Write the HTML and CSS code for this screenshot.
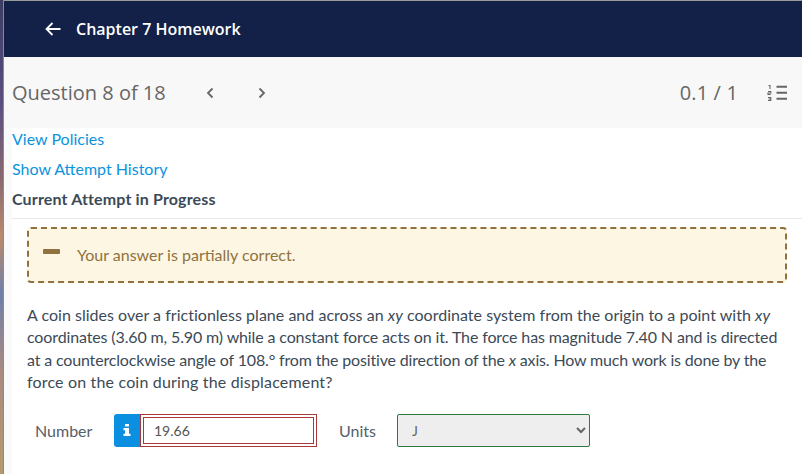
FILE: index.html
```html
<!DOCTYPE html>
<html lang="en">
<head>
  <meta charset="UTF-8">
  <meta name="viewport" content="width=device-width, initial-scale=1.0">
  <title>Chapter 7 Homework</title>
  <link rel="stylesheet" href="styles.css">
</head>
<body>
  <div class="edge"></div>
  <div class="page">
    <header class="topbar">
      <svg class="back" width="18" height="18" viewBox="0 0 18 18">
        <path d="M16.500 9H2.500M8.500 3L2.500 9l6 6" fill="none" stroke="#fff" stroke-width="1.800"/>
      </svg>
      <span class="topbar-title">Chapter 7 Homework</span>
    </header>

    <div class="question-bar">
      <span class="question-count">Question 8 of 18</span>
      <svg class="chev chev-prev" width="10" height="12" viewBox="0 0 10 12">
        <path d="M7.500 1.500L3 6l4.500 4.500" fill="none" stroke="#666" stroke-width="1.800"/>
      </svg>
      <svg class="chev chev-next" width="10" height="12" viewBox="0 0 10 12">
        <path d="M2.500 1.500L7 6l-4.500 4.500" fill="none" stroke="#666" stroke-width="1.800"/>
      </svg>
      <span class="score">0.1 / 1</span>
      <svg class="list-icon" width="20" height="18" viewBox="0 0 20 18">
        <path d="M9.500 3.700H20M9.500 9.700H20M9.500 15.700H20" stroke="#666" stroke-width="2"/>
        <path d="M1.500 2.500h1.500v3.500M1 8.500h2.800v1.500H1v1.500h2.800M1 14.500h2.800v3H1M1.500 16h2.300" fill="none" stroke="#666" stroke-width="1.100"/>
      </svg>
    </div>

    <div class="main">
      <div class="links">
        <a class="link" href="#">View Policies</a>
        <a class="link" href="#">Show Attempt History</a>
        <div class="attempt">Current Attempt in Progress</div>
      </div>

      <div class="content">
        <div class="notice">
          <span class="notice-dash"></span>
          <span class="notice-text">Your answer is partially correct.</span>
        </div>

        <p class="question">
          <span class="line line-1">A coin slides over a frictionless plane and across an <i>xy</i> coordinate system from the origin to a point with <i>xy</i></span>
          <span class="line line-2">coordinates (3.60 m, 5.90 m) while a constant force acts on it. The force has magnitude 7.40 N and is directed</span>
          <span class="line line-3">at a counterclockwise angle of 108.° from the positive direction of the <i>x</i> axis. How much work is done by the</span>
          <span class="line line-4">force on the coin during the displacement?</span>
        </p>

        <div class="answer">
          <span class="answer-label">Number</span>
          <span class="info-btn">
            <svg width="8" height="12" viewBox="0 0 8 12">
              <path d="M2 0h4v2.600H2zM0.500 4h5.500v5.800h1.500V12H0.500V9.800H2V6.200H0.500z" fill="#fff"/>
            </svg>
          </span>
          <span class="number-wrap"><input class="number-input" type="text" value="19.66"></span>
          <span class="answer-label units-label">Units</span>
          <select class="units-select"><option>J</option></select>
        </div>
      </div>
    </div>
  </div>
</body>
</html>
```

FILE: styles.css
```css
* {
  box-sizing: border-box;
}

body {
  margin: 0;
  height: 474px;
  overflow: hidden;
  display: flex;
  background-color: #fff;
  font-family: 'Lato', sans-serif;
  color: #3c4a57;
}

.edge {
  width: 4px;
  flex-shrink: 0;
  border-right: 1px solid #8a8a8a;
  background: linear-gradient(#3b3d63 0, #5a4f80 22%, #8a6a70 38%, #b98a6c 50%, #6f7fa8 62%, #a88a80 78%, #b59a70 100%);
}

.page {
  flex: 1;
  min-width: 0;
  background-color: #fafafa;
}

.topbar {
  height: 57px;
  padding-left: 40px;
  display: flex;
  align-items: center;
  border-top: 1px solid #999;
  background-color: #132148;
  color: #fff;
}

.back {
  margin-right: 14px;
}

.topbar-title {
  font-family: 'Open Sans', sans-serif;
  font-size: 16px;
  font-weight: 600;
}

.question-bar {
  height: 71px;
  padding: 0 15px 1px 8px;
  display: flex;
  align-items: center;
  background-color: #f8f8f8;
  font-family: 'Open Sans', sans-serif;
  color: #666;
}

.question-count {
  font-size: 20px;
  width: 193px;
}

.chev {
  margin-top: 2px;
}

.chev-prev {
  margin-right: 42px;
}

.score {
  margin-left: auto;
  margin-right: 29px;
  font-size: 20px;
  letter-spacing: 0.15px;
}

.main {
  margin-left: 8px;
  height: 346px;
  background-color: #fff;
}

.links {
  height: 91px;
  border-bottom: 1px solid #e8e8e8;
  font-size: 16px;
}

.link {
  display: block;
  height: 30px;
  line-height: 22px;
  color: #0b93e0;
  text-decoration: none;
}

.attempt {
  line-height: 22px;
  font-weight: 700;
  letter-spacing: 0.15px;
  color: #3c4a57;
}

.content {
  padding: 8px 15px 0 15px;
}

.notice {
  height: 56px;
  padding: 9px 14px 0 14px;
  display: flex;
  align-items: flex-start;
  background-color: #fdf6e3;
  border: 2px dashed #8f7240;
  border-radius: 4px;
  font-size: 16px;
  color: #8f7240;
}

.notice-dash {
  width: 17px;
  height: 5px;
  margin-top: 11px;
  background-color: #8f7240;
  border-radius: 1px;
}

.notice-text {
  margin-left: 17px;
  margin-top: 5px;
  line-height: 24px;
}

.question {
  margin: 21px 0 0 0;
  font-size: 16px;
  line-height: 22.4px;
  color: #3c4a57;
}

.line {
  display: block;
  white-space: nowrap;
}

.line-1 {
  letter-spacing: 0.02px;
}

.line-2 {
  letter-spacing: -0.13px;
}

.line-3 {
  letter-spacing: -0.16px;
}

.line-4 {
  letter-spacing: 0.17px;
}

.answer {
  margin-top: 20px;
  display: flex;
  align-items: center;
  font-size: 16px;
}

.answer-label {
  margin-left: 8px;
  width: 79px;
  color: #55606b;
}

.info-btn {
  width: 26px;
  height: 33px;
  display: flex;
  align-items: center;
  justify-content: center;
  background-color: #0b8fe0;
  border-radius: 3px 0 0 3px;
}

.number-wrap {
  width: 177px;
  height: 33px;
  padding: 2px;
  border: 1px solid #a93a3a;
}

.number-input {
  width: 100%;
  height: 100%;
  padding: 0 10px;
  border: 1px solid #a93a3a;
  outline: none;
  font-family: 'Lato', sans-serif;
  font-size: 14px;
  color: #555;
}

.units-label {
  margin-left: 22px;
  width: 58px;
}

.units-select {
  width: 193px;
  height: 33px;
  padding-left: 10px;
  background-color: #eee;
  border: 1px solid #2f7a3a;
  border-radius: 2px;
  font-family: 'Lato', sans-serif;
  font-size: 14px;
  color: #666;
}
```
